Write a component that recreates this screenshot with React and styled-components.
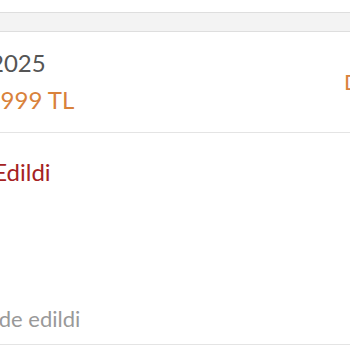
import React from 'react';
import styled, {createGlobalStyle} from 'styled-components';

const Global = createGlobalStyle`
  html, body {
    margin: 0;
    padding: 0;
    background: #fff;
    overflow: hidden;
  }
  body {
    font-family: Lato, "Noto Sans", sans-serif;
  }
`;

const Page = styled.div`
  width: 350px;
  height: 350px;
  overflow: hidden;
  padding-top: 12px;
  box-sizing: border-box;
`;

const HeadBand = styled.div`
  height: 18px;
  background: #f3f3f3;
  border-top: 1px solid #dedede;
  border-bottom: 1px solid #dedede;
`;

const Row = styled.div`
  display: flex;
  align-items: ${props => props.$top ? 'stretch' : 'center'};
  justify-content: space-between;
  border-bottom: 1px solid #e4e4e4;
  box-sizing: border-box;
  height: ${props => props.$height}px;
  padding: ${props => props.$pad};
`;

const Col = styled.div`
  display: flex;
  flex-direction: column;
  justify-content: ${props => props.$spread ? 'space-between' : 'flex-start'};
  gap: 8px;
  min-width: 0;
`;

const Text = styled.div`
  font-size: ${props => props.$size || 24}px;
  line-height: 1.2;
  color: ${props => props.$color};
  white-space: nowrap;
  margin-left: ${props => props.$shift || 0}px;
`;

const Status = styled.div`
  font-size: 22px;
  line-height: 1.2;
  color: #d9823b;
  white-space: nowrap;
  margin-right: -80px;
  width: 86px;
`;

export default function App() {
  return (
    <Page>
      <Global/>
      <HeadBand/>
      <Row $height={101} $pad="17px 0">
        <Col>
          <Text $color="#555" $shift={-77}>14.02.2025</Text>
          <Text $color="#d9823b" $shift={-19}>1.999 TL</Text>
        </Col>
        <Status>Devam</Status>
      </Row>
      <Row $top $height={212} $pad="25px 0 12px">
        <Col $spread>
          <Text $color="#a52222" $shift={-59}>İptal Edildi</Text>
          <Text $color="#999" $size={22} $shift={-18}>İade edildi</Text>
        </Col>
      </Row>
    </Page>
  );
}
